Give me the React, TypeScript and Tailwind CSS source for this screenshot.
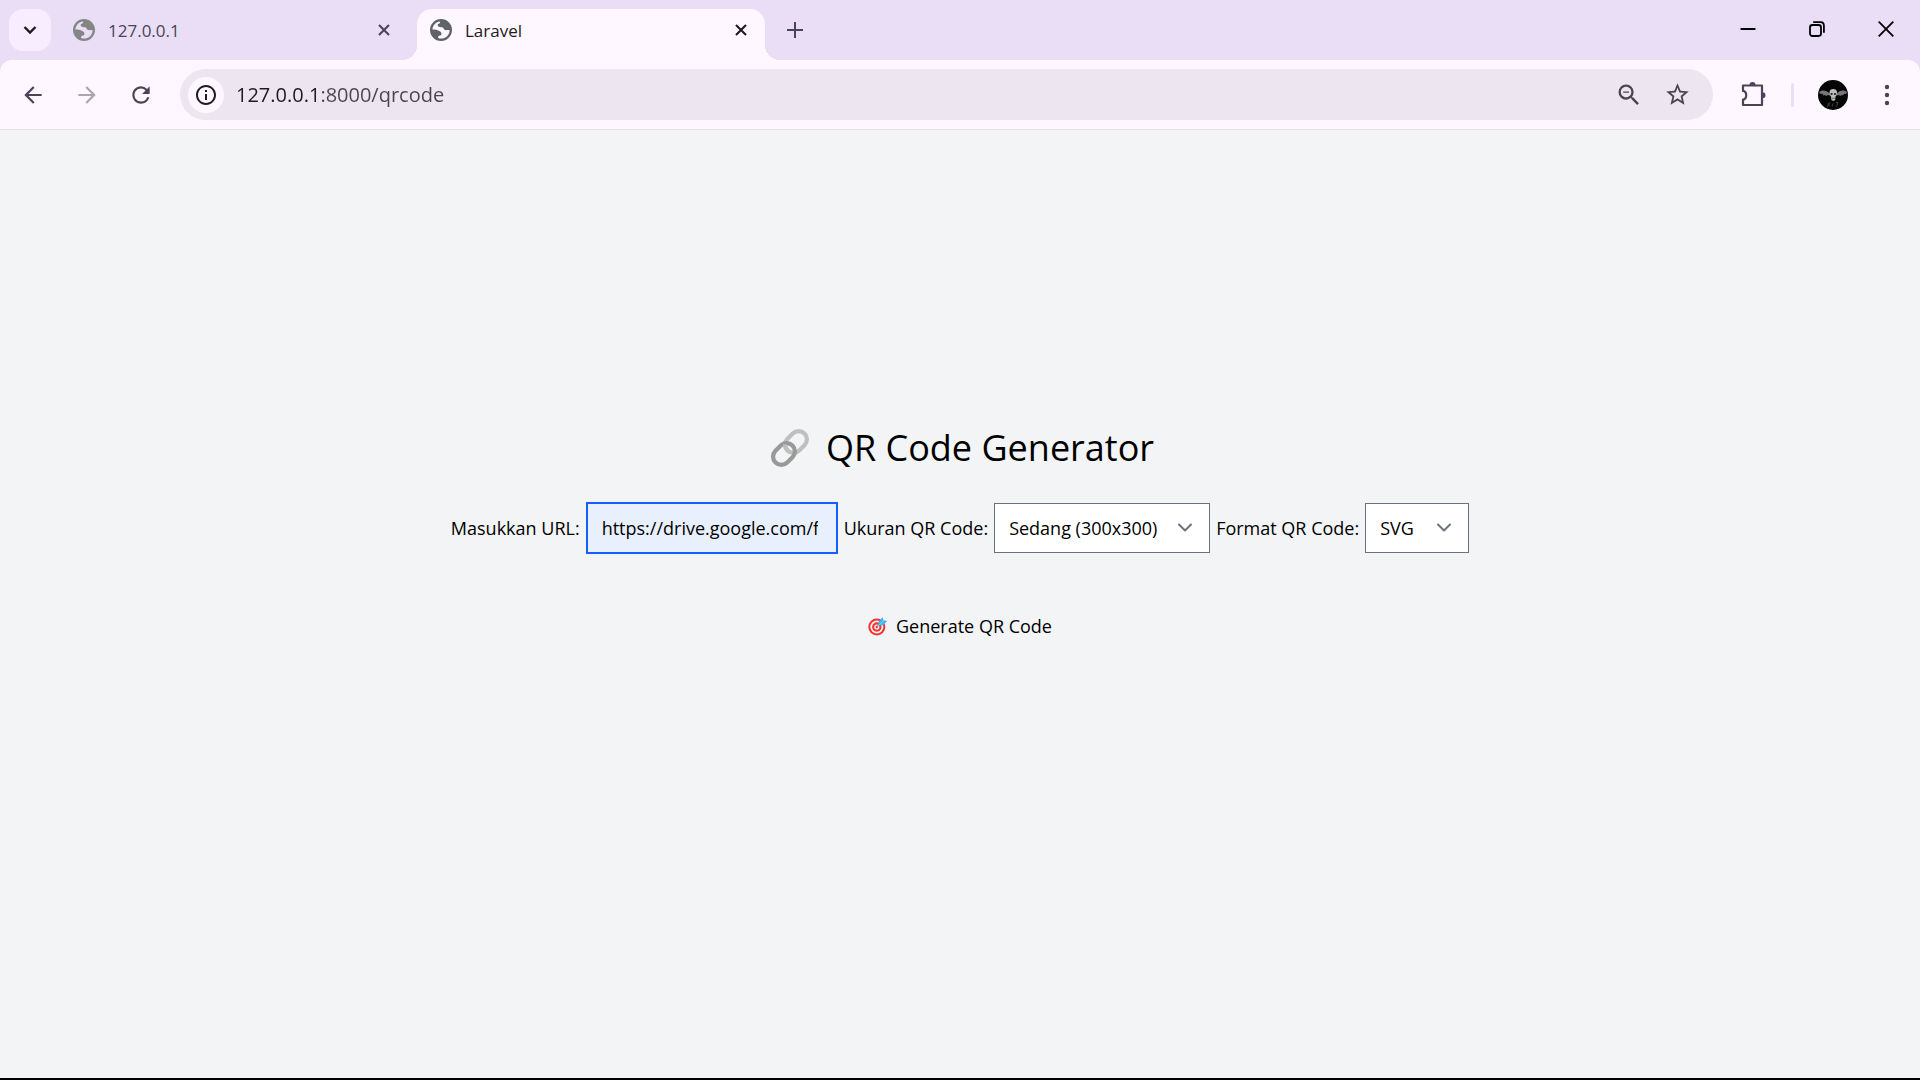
import { useState, type ReactNode } from 'react';
import { MdArrowBack, MdArrowForward, MdInfoOutline, MdRefresh, MdStarBorder, MdZoomOut } from 'react-icons/md';

function GlobeIcon({ className }: { className: string }) {
  return (
    <svg viewBox="0 0 22 22" className={`size-[22px] shrink-0 ${className}`} aria-hidden="true">
      <path
        fill="currentColor"
        fillRule="evenodd"
        d="M11 0a11 11 0 1 1 0 22a11 11 0 0 1 0-22z
           M2.4 10.4C2.7 6.2 6 2.8 10 2.4C10.5 3.4 9.8 4.4 8.6 4.8C7.4 5.2 7.4 6.2 8.2 7.2C9 8.2 10.6 8 12.2 8.2C13.8 8.6 13.8 10.6 15 11C16.4 11.4 17.6 10.8 19.6 11.2C19.6 15.8 15.8 19.6 11 19.6C10 19.6 9 19.4 8.2 19C7.8 17.6 8.6 17 10 16.6C11.4 16.4 11.6 15.2 11.4 14.2C11 12.4 9.4 12.6 8.2 11.6C7 10.6 5 10.4 2.4 10.4z"
      />
    </svg>
  );
}

function CrossIcon() {
  return (
    <svg viewBox="0 0 12 12" className="size-3" fill="none" stroke="currentColor" strokeWidth="2.1" aria-hidden="true">
      <path d="M1 1l10 10M11 1L1 11" />
    </svg>
  );
}

function IconButton({ label, className = '', children }: { label: string; className?: string; children: ReactNode }) {
  return (
    <button type="button" aria-label={label} className={`flex shrink-0 items-center justify-center ${className}`}>
      {children}
    </button>
  );
}

function TabStrip() {
  return (
    <div className="flex h-[60px] items-end bg-[#eaddf6] pl-[9px]">
      <IconButton label="Search tabs" className="mb-[9px] size-[42px] rounded-[14px] bg-[#f8edff] text-[#1d1b20]">
        <svg viewBox="0 0 14 10" className="h-[10px] w-[14px]" fill="none" stroke="currentColor" strokeWidth="2.4" aria-hidden="true">
          <path d="M1.5 2L7 7.5L12.5 2" />
        </svg>
      </IconButton>

      <div className="flex h-[51px] w-[366px] items-center pb-[9px] pl-[22px] pr-[27px] text-[#4a4458]">
        <GlobeIcon className="text-[#858585]" />
        <span className="ml-[13px] mt-0.5 flex-1 text-[17px]">127.0.0.1</span>
        <IconButton label="Close tab">
          <CrossIcon />
        </IconButton>
      </div>

      <div className="relative flex h-[51px] w-[348px] items-center rounded-t-[15px] bg-[#fef7ff] pb-[9px] pl-[13px] pr-[18px] text-[#1d1b20] before:absolute before:bottom-0 before:-left-[15px] before:size-[15px] before:bg-[radial-gradient(circle_at_top_left,transparent_15px,#fef7ff_15px)] after:absolute after:bottom-0 after:-right-[15px] after:size-[15px] after:bg-[radial-gradient(circle_at_top_right,transparent_15px,#fef7ff_15px)]">
        <GlobeIcon className="text-[#5f6368]" />
        <span className="ml-[13px] mt-0.5 flex-1 text-[17px]">Laravel</span>
        <IconButton label="Close tab">
          <CrossIcon />
        </IconButton>
      </div>

      <IconButton label="New tab" className="mb-[9px] ml-[9px] size-[42px] text-[#4a4458]">
        <svg viewBox="0 0 16 16" className="size-4" fill="none" stroke="currentColor" strokeWidth="2" aria-hidden="true">
          <path d="M8 0v16M0 8h16" />
        </svg>
      </IconButton>

      <div className="ml-auto flex self-start text-black">
        <IconButton label="Minimize" className="h-[58px] w-[69px]">
          <svg viewBox="0 0 16 16" className="size-4" fill="none" stroke="currentColor" strokeWidth="2" aria-hidden="true">
            <path d="M0.5 8h15" />
          </svg>
        </IconButton>
        <IconButton label="Restore" className="h-[58px] w-[69px]">
          <svg viewBox="0 0 16 16" className="size-4" fill="none" stroke="currentColor" strokeWidth="1.8" aria-hidden="true">
            <rect x="1" y="4" width="11" height="11" rx="2.4" />
            <path d="M4.2 1.2H11.5Q14.9 1.2 14.9 4.6V11.8" />
          </svg>
        </IconButton>
        <IconButton label="Close window" className="h-[58px] w-[69px]">
          <svg viewBox="0 0 16 16" className="size-4" fill="none" stroke="currentColor" strokeWidth="1.8" aria-hidden="true">
            <path d="M0.7 0.7l14.6 14.6M15.3 0.7L0.7 15.3" />
          </svg>
        </IconButton>
      </div>
    </div>
  );
}

function Avatar() {
  return (
    <svg viewBox="0 0 30 30" className="size-[30px]" aria-hidden="true">
      <circle cx="15" cy="15" r="15" fill="#050505" />
      <path d="M1 12C4 9.5 8 10 12 13.5L12 15.5L9.5 15L8.5 16L6.5 15L5.5 15.5L4.5 13.8L2.5 14z" fill="#777" />
      <path d="M29 12C26 9.5 22 10 18.5 13.5L18.5 15.5L21 15L22 16L24 15L25 15.5L26 13.8L28 14z" fill="#777" />
      <path d="M11.5 12.5C11.5 10 13 9 15.300 9C17.600 9 19 10 19 12.500C19 14.500 18.500 15.500 17.500 16.500L17.200 20L15.300 21L13.400 20L13 16.500C12 15.500 11.500 14.500 11.500 12.500z" fill="#bdbdbd" />
      <ellipse cx="13.6" cy="14" rx="1.2" ry="1.1" fill="#222" />
      <ellipse cx="17" cy="14" rx="1.2" ry="1.1" fill="#222" />
      <path d="M13.8 18.3H16.8" stroke="#444" strokeWidth="0.7" />
      <path d="M10.5 23l-1 4M10.5 23h2M10 25h2M15 23.5l-1 3M18 22.5h2l-1.5 4" stroke="#4a4a4a" strokeWidth="0.9" fill="none" />
    </svg>
  );
}

function Toolbar() {
  const [address, setAddress] = useState('127.0.0.1:8000/qrcode');
  return (
    <div className="bg-[#eaddf6]">
      <div className="flex h-[70px] items-center rounded-t-[12px] border-b border-[#e6e0e9] bg-[#fef7ff] pl-[19px] pr-[19px] text-[#4a4458]">
        <IconButton label="Back" className="size-7">
          <MdArrowBack size={26} />
        </IconButton>
        <IconButton label="Forward" className="ml-[26px] size-7 text-[#aaa6ad]">
          <MdArrowForward size={26} />
        </IconButton>
        <IconButton label="Reload" className="ml-[26px] size-7">
          <MdRefresh size={26} />
        </IconButton>

        <div className="ml-[25px] flex h-[51px] flex-1 items-center rounded-full bg-[#ede6f1] pl-[8px] pr-[22px]">
          <IconButton label="Site information" className="size-9 rounded-full bg-[#fef7ff] text-[#1d1b20]">
            <MdInfoOutline size={24} />
          </IconButton>
          <input
            type="text"
            aria-label="Address"
            value={address}
            onChange={(event) => setAddress(event.target.value)}
            className="ml-3 min-w-0 flex-1 bg-[linear-gradient(to_right,#1d1b20_85px,#49454f_85px)] bg-clip-text text-[20px] leading-7 text-transparent caret-black outline-none"
          />
          <IconButton label="Zoom" className="size-7 text-[#49454f]">
            <MdZoomOut size={28} />
          </IconButton>
          <IconButton label="Bookmark this tab" className="ml-5 size-7 text-[#49454f]">
            <MdStarBorder size={27} />
          </IconButton>
        </div>

        <IconButton label="Extensions" className="ml-[26px] size-7">
          <svg viewBox="0 0 28 28" className="size-7" aria-hidden="true">
            <path
              d="M4 4.500H23V24H4V18.600C8.300 18 8.300 10.500 4 9.900z"
              fill="none"
              stroke="currentColor"
              strokeWidth="2.2"
              strokeLinejoin="round"
            />
            <path d="M10.5 4A3 3 0 0 1 16.5 4zM23.5 11.200A3 3 0 0 1 23.5 17.200z" fill="currentColor" />
          </svg>
        </IconButton>
        <span className="ml-6 h-6 w-[3px] rounded-full bg-[#eaddff]" />
        <IconButton label="Profile" className="ml-6 size-[30px]">
          <Avatar />
        </IconButton>
        <IconButton label="Menu" className="ml-[25px] size-7">
          <svg viewBox="0 0 28 28" className="size-7" fill="currentColor" aria-hidden="true">
            <circle cx="14" cy="6" r="2.2" />
            <circle cx="14" cy="14" r="2.2" />
            <circle cx="14" cy="22" r="2.2" />
          </svg>
        </IconButton>
      </div>
    </div>
  );
}

function LinkIcon() {
  return (
    <svg viewBox="0 0 48 40" className="h-10 w-12" fill="none" strokeWidth="4.2" aria-hidden="true">
      <g transform="rotate(-45 24 20)">
        <rect x="20.5" y="11.7" width="24" height="16.6" rx="8.3" stroke="#bfbfbf" />
        <rect x="3.5" y="11.7" width="24" height="16.6" rx="8.3" stroke="#999999" />
        <path d="M20.5 22V20A8.3 8.3 0 0 1 23 14" stroke="#bfbfbf" />
      </g>
    </svg>
  );
}

function TargetIcon() {
  return (
    <svg viewBox="0 0 20 20" className="size-5" aria-hidden="true">
      <circle cx="8.8" cy="11" r="8.5" fill="#f8312f" />
      <circle cx="8.8" cy="11" r="6.5" fill="#f4f4f4" />
      <circle cx="8.8" cy="11" r="4.7" fill="#f8312f" />
      <circle cx="8.8" cy="11" r="2.6" fill="#f4f4f4" />
      <circle cx="8.8" cy="11" r="1.2" fill="#f8312f" />
      <path d="M9 10.8L14 6" stroke="#8395a7" strokeWidth="1.2" />
      <path d="M10.5 9.6V5.6L14.6 1.2L15.6 4.2L19.2 5L15 9.6z" fill="#3fb6f3" />
      <path d="M10.5 9.6L16 4.2" stroke="#83d5fb" strokeWidth="0.9" />
    </svg>
  );
}

function SelectField({ id, label, options, className }: { id: string; label: string; options: string[]; className: string }) {
  return (
    <>
      <label htmlFor={id}>{label}</label>
      <div className={`relative ${className}`}>
        <select id={id} className="h-[50px] w-full appearance-none border border-gray-500 bg-white pl-[14px] pr-10 outline-none">
          {options.map((option) => (
            <option key={option}>{option}</option>
          ))}
        </select>
        <svg
          viewBox="0 0 16 10"
          className="pointer-events-none absolute right-[17px] top-5 h-[10px] w-4"
          fill="none"
          stroke="#6b7280"
          strokeWidth="2"
          strokeLinecap="round"
          strokeLinejoin="round"
          aria-hidden="true"
        >
          <path d="M2 1.5l6 6l6-6" />
        </svg>
      </div>
    </>
  );
}

export default function App() {
  const [url, setUrl] = useState('https://drive.google.com/file/d/1/view');
  return (
    <div className="flex min-h-screen flex-col border-b-2 border-black bg-[#f3f4f5] font-['Open_Sans','Noto_Sans',sans-serif]">
      <header>
        <TabStrip />
        <Toolbar />
      </header>
      <main className="flex flex-1 flex-col items-center pt-[293px] text-[18px] leading-7 text-black">
        <h1 className="flex items-center gap-3 text-[36px] leading-[50px]">
          <LinkIcon />
          QR Code Generator
        </h1>
        <form className="mt-[29px] flex flex-col items-center" onSubmit={(event) => event.preventDefault()}>
          <div className="flex items-center gap-[6px]">
            <label htmlFor="url">Masukkan URL:</label>
            <input
              id="url"
              type="text"
              value={url}
              onChange={(event) => setUrl(event.target.value)}
              className="h-[52px] w-[252px] border-2 border-blue-600 bg-[#e8f0fe] pl-[14px] pr-[18px] outline-none"
            />
            <SelectField
              id="size"
              label="Ukuran QR Code:"
              options={['Sedang (300x300)', 'Kecil (200x200)', 'Besar (400x400)']}
              className="w-[216px]"
            />
            <SelectField id="format" label="Format QR Code:" options={['SVG', 'PNG']} className="w-[104px]" />
          </div>
          <button type="submit" className="mt-[58px] flex items-center gap-2 leading-7">
            <TargetIcon />
            Generate QR Code
          </button>
        </form>
      </main>
    </div>
  );
}
